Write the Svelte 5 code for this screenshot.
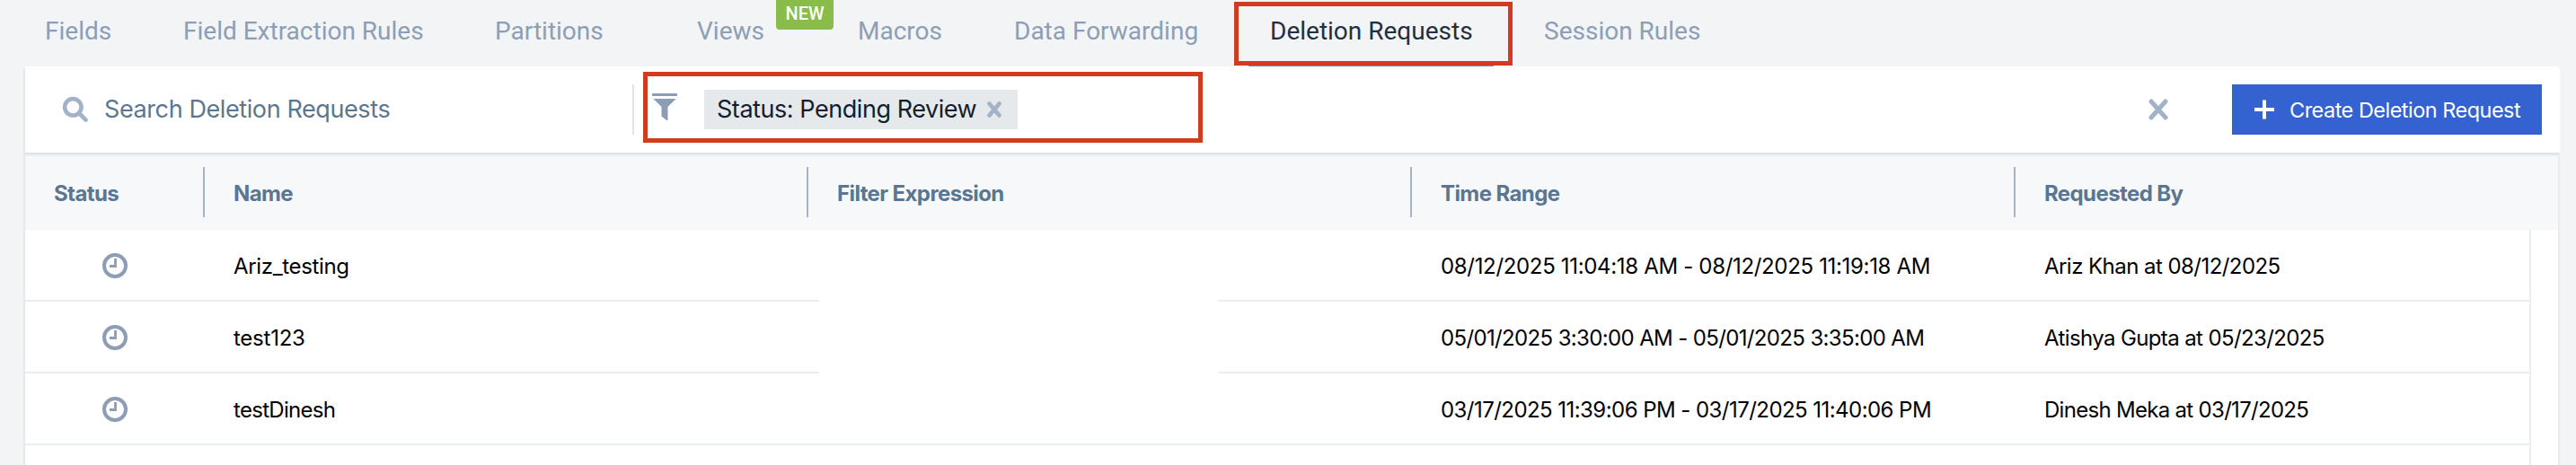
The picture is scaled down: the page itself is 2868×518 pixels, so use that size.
<script>
  const tabs = [
    { label: 'Fields', width: 74 },
    { label: 'Field Extraction Rules', width: 267 },
    { label: 'Partitions', width: 121 },
    { label: 'Views', width: 75, badge: 'NEW' },
    { label: 'Macros', width: 94 },
    { label: 'Data Forwarding', width: 205 },
    { label: 'Deletion Requests', width: 225, active: true },
    { label: 'Session Rules', width: 174 },
  ];
  const columns = ['Status', 'Name', 'Filter Expression', 'Time Range', 'Requested By'];
  const rows = [
    { name: 'Ariz_testing', range: '08/12/2025 11:04:18 AM - 08/12/2025 11:19:18 AM', by: 'Ariz Khan at 08/12/2025', ns: -0.35, rs: -0.33, bs: -0.55 },
    { name: 'test123', range: '05/01/2025 3:30:00 AM - 05/01/2025 3:35:00 AM', by: 'Atishya Gupta at 05/23/2025', ns: -0.25, rs: -0.64, bs: -0.62 },
    { name: 'testDinesh', range: '03/17/2025 11:39:06 PM - 03/17/2025 11:40:06 PM', by: 'Dinesh Meka at 03/17/2025', ns: -0.7, rs: -0.55, bs: -0.7 },
  ];
</script>

<div class="page">
  <nav class="tabs">
    {#each tabs as tab}
      <div class="tab" class:active={tab.active} class:wide={tab.badge} style="width: {tab.width}px">
        <span>{tab.label}</span>
        {#if tab.badge}<b class="badge">{tab.badge}</b>{/if}
        {#if tab.active}<i class="mark"></i>{/if}
      </div>
    {/each}
  </nav>

  <section class="panel">
    <div class="toolbar">
      <svg class="search-icon" width="30" height="30" viewBox="0 0 30 30"><circle cx="12.3" cy="12.3" r="9.2" /><path d="M19 19L26.6 26.6" /></svg>
      <span class="placeholder">Search Deletion Requests</span>
      <div class="filter">
        <i class="mark"></i>
        <svg class="funnel" width="28" height="30" viewBox="0 0 28 30"><path d="M1 0h26q1 0 1 1v2H0V1q0-1 1-1zM1.3 6h25.4L17.5 15v15h-1.3L10.5 25.500V15z" /></svg>
        <div class="chip">
          <span>Status: Pending Review</span>
          <svg class="cross" width="18" height="18" viewBox="0 0 18 18"><path d="M3.500 2.500l11 13M14.500 2.500l-11 13" /></svg>
        </div>
      </div>
      <svg class="clear cross" width="24" height="24" viewBox="0 0 24 24"><path d="M4 3l16 18M20 3L4 21" /></svg>
      <button>
        <svg width="22" height="22" viewBox="0 0 22 22"><path d="M11 0.500v21M0 11h22" /></svg>
        <span>Create Deletion Request</span>
      </button>
    </div>

    <div class="head grid">
      {#each columns as column}<div class="th"><span>{column}</span></div>{/each}
    </div>

    <div class="body">
      {#each rows as row}
        <div class="row grid">
          <div class="status">
            <svg width="28" height="28" viewBox="0 0 28 28"><circle cx="14" cy="14" r="12" /><path d="M14.500 6v8.500H8" /></svg>
          </div>
          <div class="td"><span style="letter-spacing: {row.ns}px">{row.name}</span></div>
          <div class="td blank"></div>
          <div class="td"><span style="letter-spacing: {row.rs}px">{row.range}</span></div>
          <div class="td"><span style="letter-spacing: {row.bs}px">{row.by}</span></div>
        </div>
      {/each}
    </div>
  </section>
</div>

<style>
  :global(body) { background: #f2f4f6; }
  * { box-sizing: border-box; }
  .page { width: 2868px; height: 518px; overflow: hidden; background: #f2f4f6; font-family: Inter, 'Liberation Sans', sans-serif; }
  .tabs { display: flex; gap: 80px; height: 74px; padding-left: 50px; font: 28px/70px Roboto, sans-serif; color: #8d9eb5; }
  .tab { position: relative; flex: none; white-space: nowrap; }
  .tab.wide { margin: 0 24px; }
  .tab.active { color: #232f40; }
  .badge { position: absolute; left: 88px; top: 0; width: 64px; height: 33px; border-radius: 0 0 4px 4px; background: #89bc4b; color: #fff; font: 500 20px/31px Roboto, sans-serif; text-align: center; }
  .tab .mark { position: absolute; z-index: 1; left: -40px; top: 2px; width: 310px; height: 71px; border: 5px solid #d33a22; }
  .tab.active::after { content: ''; position: absolute; left: -24px; width: 273px; bottom: 0; height: 4px; background: #6a8fc4; }
  .panel { width: 2824px; height: 444px; margin-left: 26px; border-left: 2px solid #e3e9ee; border-right: 2px solid #e9ecef; border-radius: 5px 5px 0 0; background: #fff; }
  .toolbar { display: flex; align-items: center; height: 96px; position: relative; padding-left: 41px; margin-right: -2px; background: #fff; border-radius: 0 5px 0 0; }
  .search-icon { fill: none; stroke: #a2b3c7; stroke-width: 4.6; stroke-linecap: round; flex: none; }
  .placeholder { width: 588px; margin-left: 17px; padding-bottom: 2px; flex: none; font-size: 27px; letter-spacing: -0.4px; color: #5b7690; white-space: nowrap; }
  .filter { position: relative; display: flex; align-items: center; height: 56px; padding-left: 20px; border-left: 2px solid #dfe5ea; }
  .filter .mark { position: absolute; left: 10px; top: -14px; width: 623px; height: 79px; border: 5px solid #d33a22; }
  .funnel { fill: #8c9db4; margin-top: -6px; }
  .chip { display: flex; align-items: center; justify-content: space-between; width: 349px; height: 44px; margin-left: 30px; padding: 0 17px 0 14px; background: #e5e9ec; font-size: 27px; letter-spacing: -0.45px; color: #141d2e; white-space: nowrap; }
  .chip span { padding-bottom: 2px; }
  .cross { fill: none; stroke: #a2b3c7; stroke-width: 5; stroke-linecap: round; flex: none; }
  .chip .cross { stroke-width: 4.6; }
  .clear { margin-left: auto; margin-right: 70px; }
  button { display: flex; align-items: center; width: 345px; height: 56px; margin-right: 20px; padding: 0 0 0 25px; border: 0; background: #3462d0; color: #fff; font: 23.5px Inter, sans-serif; letter-spacing: -0.52px; white-space: nowrap; }
  button svg { fill: none; stroke: #fff; stroke-width: 4; margin-right: 17px; }
  .grid { display: grid; grid-template-columns: 198px 672px 672px 672px 1fr; }
  .head { height: 86px; padding-top: 14px; border-top: 2px solid #dbe3e9; border-bottom: 2px solid #f4f7f8; background: linear-gradient(#ebeff2 2px, #f6f8fa 2px); color: #5b7690; font-size: 24px; font-weight: 700; letter-spacing: -0.6px; }
  .th { height: 56px; padding-left: 32px; line-height: 59px; border-left: 2px solid #a2b3c7; }
  .th:first-child { border: 0; }
  .body { width: 2790px; height: 262px; border-right: 2px solid #e9eef2; font-size: 24px; color: #000; }
  .row { height: 80px; align-items: center; border-bottom: 2px solid #e9eef2; }
  .td { padding-left: 34px; white-space: nowrap; }
  .status { padding-left: 86px; display: flex; }
  .status svg { fill: none; stroke: #8c9db4; stroke-width: 4; }
  .status path { stroke-width: 2.8; }
  .blank { height: 80px; width: 444px; margin-left: 14px; background: #fff; position: relative; top: 1px; }
  .row:last-child .blank { visibility: hidden; }
</style>
